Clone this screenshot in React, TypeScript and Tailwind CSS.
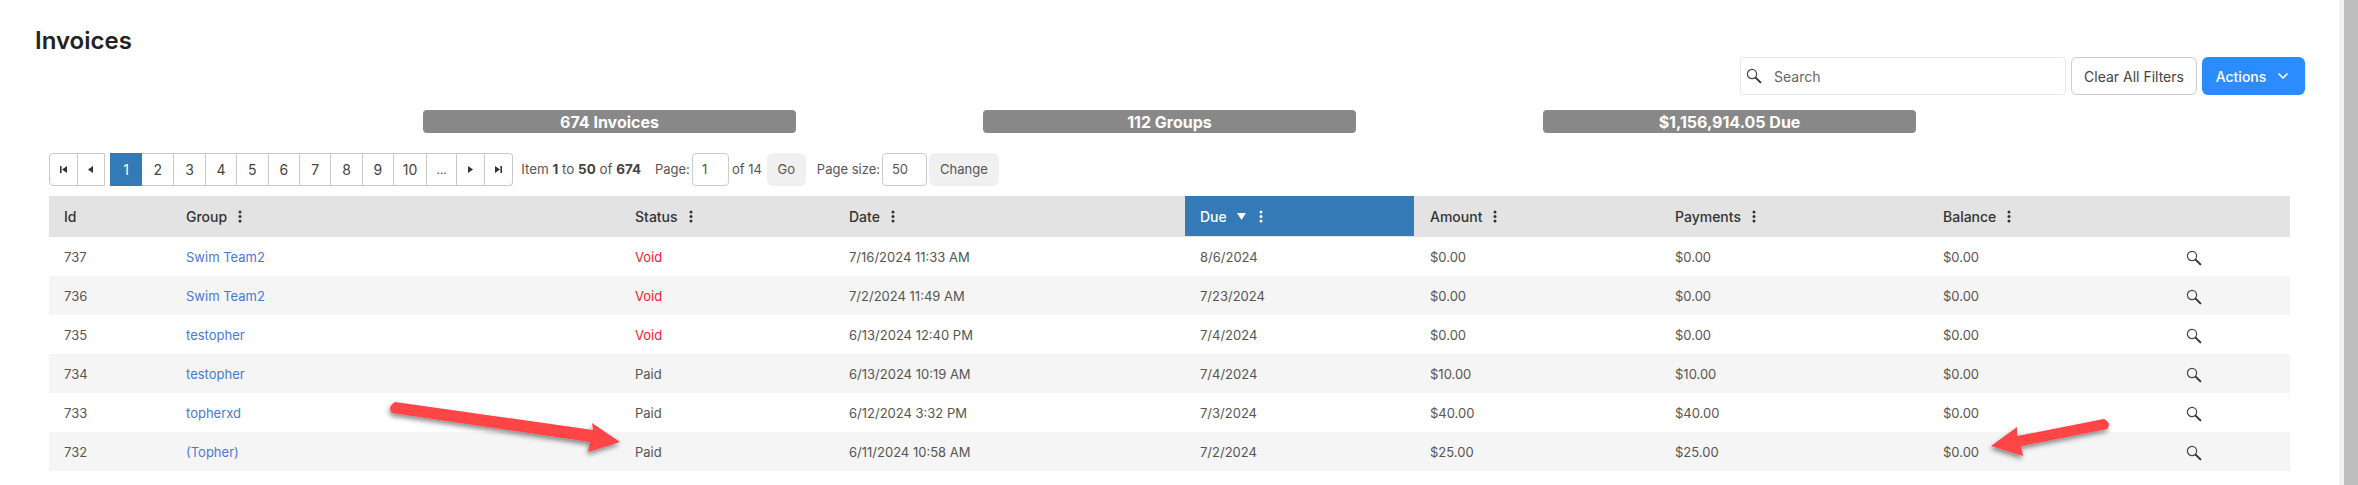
import React from 'react';
import { ChevronDown } from 'lucide-react';

interface InvoiceRow {
    id: number;
    group: string;
    status: string;
    date: string;
    due: string;
    amount: string;
    payments: string;
    balance: string;
}

const rows: InvoiceRow[] = [
    { id: 737, group: 'Swim Team2', status: 'Void', date: '7/16/2024 11:33 AM', due: '8/6/2024', amount: '$0.00', payments: '$0.00', balance: '$0.00' },
    { id: 736, group: 'Swim Team2', status: 'Void', date: '7/2/2024 11:49 AM', due: '7/23/2024', amount: '$0.00', payments: '$0.00', balance: '$0.00' },
    { id: 735, group: 'testopher', status: 'Void', date: '6/13/2024 12:40 PM', due: '7/4/2024', amount: '$0.00', payments: '$0.00', balance: '$0.00' },
    { id: 734, group: 'testopher', status: 'Paid', date: '6/13/2024 10:19 AM', due: '7/4/2024', amount: '$10.00', payments: '$10.00', balance: '$0.00' },
    { id: 733, group: 'topherxd', status: 'Paid', date: '6/12/2024 3:32 PM', due: '7/3/2024', amount: '$40.00', payments: '$40.00', balance: '$0.00' },
    { id: 732, group: '(Topher)', status: 'Paid', date: '6/11/2024 10:58 AM', due: '7/2/2024', amount: '$25.00', payments: '$25.00', balance: '$0.00' },
];

const columns = 'grid grid-cols-[122px_449px_214px_351px_230px_245px_268px_242px_120px]';

const Kebab = ({ className }: { className: string }) => (
    <svg width="4" height="13" viewBox="0 0 4 13" className={className}>
        <circle cx="2" cy="2" r="1.5" fill="currentColor" />
        <circle cx="2" cy="6.5" r="1.5" fill="currentColor" />
        <circle cx="2" cy="11" r="1.5" fill="currentColor" />
    </svg>
);

// magnifier with the heavier handle used by the grid
const Magnifier = ({ className }: { className?: string }) => (
    <svg width="16" height="16" viewBox="0 0 16 16" fill="none" className={className}>
        <circle cx="6" cy="6" r="4.6" stroke="#444" strokeWidth="1.2" />
        <path d="M9.6 9.6L14.4 14.4" stroke="#333" strokeWidth="2" strokeLinecap="round" />
    </svg>
);

const HeadCell = ({ label }: { label: string }) => (
    <div className="flex items-center gap-[11px] pl-[15px] text-[14px] font-medium text-[#333]">
        {label}
        <Kebab className="text-[#333]" />
    </div>
);

const PagerIcon = ({ d }: { d: string }) => (
    <svg width="9" height="9" viewBox="0 0 9 9">
        <path d={d} fill="#333" />
    </svg>
);

const pagerCell = 'flex h-full items-center justify-center border-l border-[#c9c9c9] first:border-l-0';

const Pager = () => (
    <div className="flex h-[33px] items-stretch text-[14px] text-[#444]">
        <div className="flex w-[56px] rounded-l-[4px] border border-[#c9c9c9]">
            <div className={`${pagerCell} w-[28px]`}><PagerIcon d="M1 1h1.6v7H1zM8 1v7L3 4.5z" /></div>
            <div className={`${pagerCell} w-[28px]`}><PagerIcon d="M7 1v7L2 4.5z" /></div>
        </div>
        <div className="ml-[5px] flex w-[32px] items-center justify-center bg-[#337ab7] text-white">1</div>
        <div className="flex rounded-r-[4px] border-y border-r border-[#c9c9c9]">
            {['2', '3', '4', '5', '6', '7', '8', '9'].map((n) => (
                <div key={n} className={`${pagerCell} w-[31.4px]`}>{n}</div>
            ))}
            <div className={`${pagerCell} w-[33px]`}>10</div>
            <div className={`${pagerCell} w-[30px] text-[12px]`}>...</div>
            <div className={`${pagerCell} w-[28px]`}><PagerIcon d="M2 1v7l5-3.5z" /></div>
            <div className="flex w-[28px] items-center justify-center border-l border-[#c9c9c9]"><PagerIcon d="M1 1v7l5-3.5zM6.4 1H8v7H6.4z" /></div>
        </div>
    </div>
);

const PagerInput = ({ value, width }: { value: string; width: string }) => (
    <div className={`flex h-[33px] items-center rounded-[4px] border border-[#ccc] pl-[9px] text-[13px] text-[#555] ${width}`}>{value}</div>
);

const App: React.FC = () => {
    return (
        <div className="relative h-[485px] overflow-hidden bg-white font-['Inter',sans-serif]">
            <div className="pl-[35px] pt-[28px]">
                <h1 className="text-[24px] font-semibold leading-[26px] text-[#222]">Invoices</h1>

                <div className="mt-[3px] flex justify-end gap-[5px] pr-[53px]">
                    <div className="flex h-[38px] w-[326px] items-center gap-[12px] rounded-[4px] border border-[#e8e8e8] pl-[5px] text-[14px] text-[#666]">
                        <Magnifier />
                        Search
                    </div>
                    <button className="h-[38px] w-[126px] rounded-[6px] border border-[#ccc] text-[14px] text-[#444]">Clear All Filters</button>
                    <button className="flex h-[38px] w-[103px] items-center justify-center gap-[9px] rounded-[6px] bg-[#2b8cff] text-[14px] font-medium text-white">
                        Actions
                        <ChevronDown className="size-[16px]" strokeWidth={2.5} />
                    </button>
                </div>
            </div>

            <div className="ml-[49px] w-[2241px]">
                <div className="mt-[15px] flex justify-center gap-[187px]">
                    {['674 Invoices', '112 Groups', '$1,156,914.05 Due'].map((label) => (
                        <div key={label} className="flex h-[23px] w-[373px] items-center justify-center rounded-[4px] bg-[#888] text-[16px] font-bold text-white">
                            {label}
                        </div>
                    ))}
                </div>

                <div className="mt-[20px] flex items-center text-[13px] text-[#555]">
                    <Pager />
                    <span className="ml-[8px] text-[13.4px]">Item <b className="font-bold text-[#444]">1</b> to <b className="font-bold text-[#444]">50</b> of <b className="font-bold text-[#444]">674</b></span>
                    <span className="ml-[14px] mr-[2px]">Page:</span>
                    <PagerInput value="1" width="w-[37px]" />
                    <span className="ml-[3px]">of 14</span>
                    <button className="ml-[5px] h-[33px] w-[39px] rounded-[6px] bg-[#f0f0f0] text-[#555]">Go</button>
                    <span className="ml-[11px]">Page size:</span>
                    <PagerInput value="50" width="ml-[2px] w-[45px]" />
                    <button className="ml-[2px] h-[33px] w-[70px] rounded-[6px] bg-[#f0f0f0] text-[#555]">Change</button>
                </div>

                <div className={`${columns} mt-[10px] h-[41px] items-center bg-[#e3e3e3]`}>
                    <div className="pl-[15px] text-[14px] font-medium text-[#333]">Id</div>
                    <HeadCell label="Group" />
                    <HeadCell label="Status" />
                    <HeadCell label="Date" />
                    <div className="mr-[1px] flex h-[40px] items-center self-start bg-[#337ab7] pl-[15px] text-[14px] font-medium text-white">
                        Due
                        <svg width="9" height="7" viewBox="0 0 9 7" className="ml-[10px]"><path d="M0 0h9L4.5 7z" fill="#fff" /></svg>
                        <Kebab className="ml-[13px] text-white" />
                    </div>
                    <HeadCell label="Amount" />
                    <HeadCell label="Payments" />
                    <HeadCell label="Balance" />
                    <div />
                </div>

                {rows.map((row, i) => (
                    <div key={row.id} className={`${columns} h-[39px] items-center pt-[2px] text-[13px] text-[#555] ${i % 2 === 1 ? 'bg-[#f5f5f5]' : ''}`}>
                        <div className="pl-[15px]">{row.id}</div>
                        <div className="pl-[15px] text-[#4a78d8]">{row.group}</div>
                        <div className={row.status === 'Void' ? 'pl-[15px] text-[#f0202e]' : 'pl-[15px]'}>{row.status}</div>
                        <div className="pl-[15px]">{row.date}</div>
                        <div className="pl-[15px]">{row.due}</div>
                        <div className="pl-[15px]">{row.amount}</div>
                        <div className="pl-[15px]">{row.payments}</div>
                        <div className="pl-[15px]">{row.balance}</div>
                        <div className="pl-[16px]"><Magnifier className="mt-[1px]" /></div>
                    </div>
                ))}
            </div>

            {/* scrollbar */}
            <div className="absolute right-0 top-0 flex h-full">
                <div className="w-[5px] bg-[#f1f1f1]" />
                <div className="w-[14px] bg-[#bdbdbd]" />
            </div>

            {/* annotation arrows */}
            <svg className="pointer-events-none absolute left-0 top-0" width="2358" height="485">
                <defs>
                    <filter id="arrowShadow" x="-20%" y="-40%" width="140%" height="180%">
                        <feDropShadow dx="-1" dy="3" stdDeviation="2.5" floodColor="#000" floodOpacity="0.45" />
                    </filter>
                </defs>
                <g fill="#ff4444" filter="url(#arrowShadow)">
                    <path d="M395 402 L593 430 L592 423 L620 442 L588 452 L590 442 L392 413 Q387 407 395 402 Z" />
                    <path d="M2104 419 L2017 436 L2017 427 L1991 446 L2023 456 L2021 446 L2107 429 Q2112 423 2104 419 Z" />
                </g>
            </svg>
        </div>
    );
};

export default App;
